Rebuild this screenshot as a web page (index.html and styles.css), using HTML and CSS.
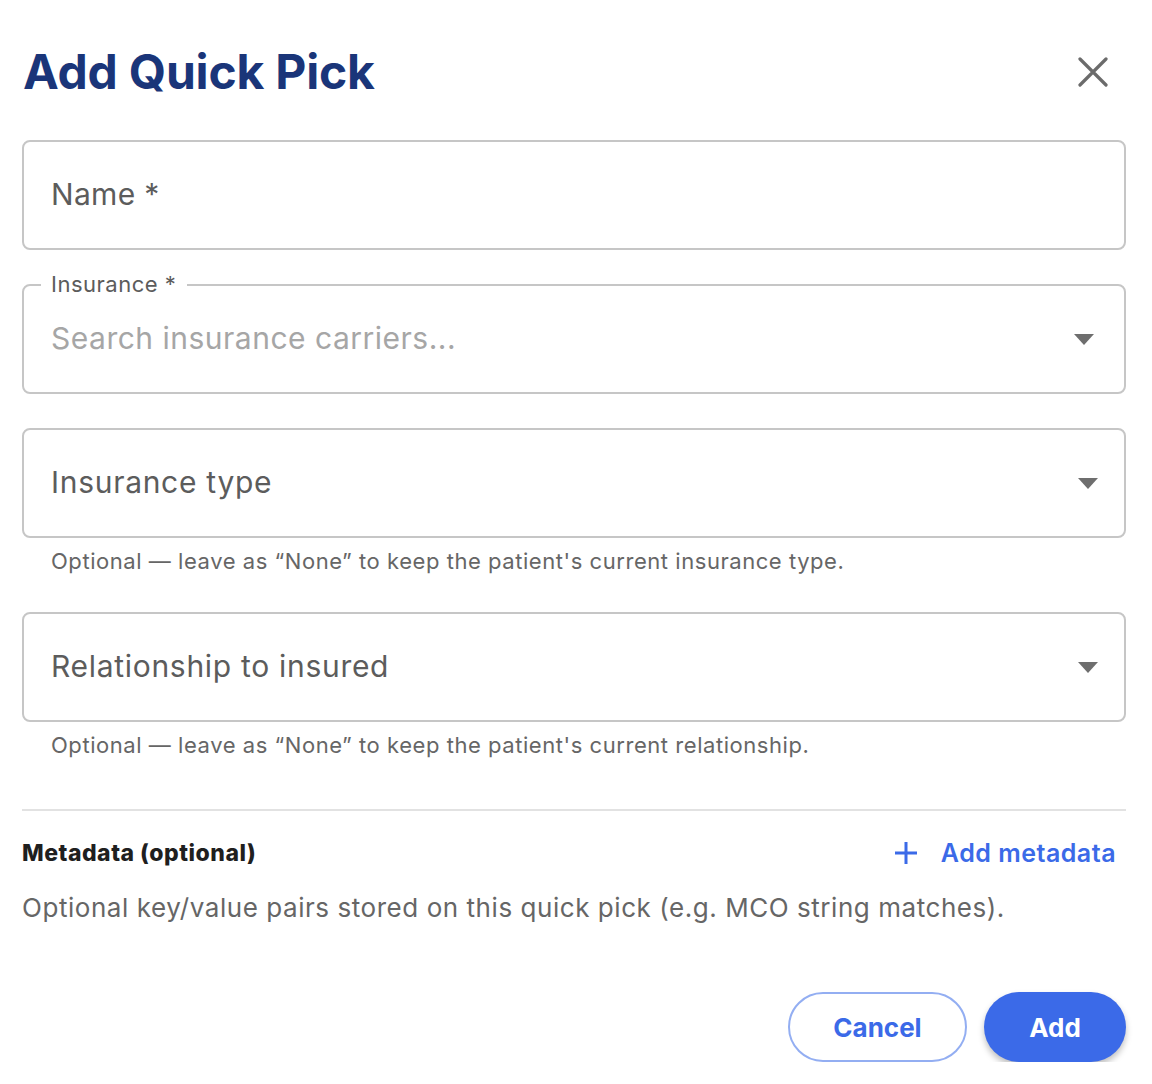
FILE: index.html
```html
<!DOCTYPE html>
<html lang="en">
<head>
<meta charset="utf-8">
<title>Add Quick Pick</title>
<link rel="stylesheet" href="styles.css">
</head>
<body>
<div class="dialog">
  <div class="header">
    <h1 class="title">Add Quick Pick</h1>
    <button class="close" aria-label="Close">
      <svg width="30" height="30" viewBox="0 0 30 30"><path d="M2 2 L28 28 M28 2 L2 28" stroke="#6b6b6b" stroke-width="3.2" stroke-linecap="round" fill="none"/></svg>
    </button>
  </div>

  <div class="field field-name">
    <span class="field-text">Name *</span>
  </div>

  <div class="field field-ins">
    <span class="float-label">Insurance *</span>
    <span class="field-text placeholder">Search insurance carriers...</span>
    <span class="caret caret-a"></span>
  </div>

  <div class="field field-type">
    <span class="field-text">Insurance type</span>
    <span class="caret"></span>
  </div>
  <p class="helper">Optional — leave as “None” to keep the patient's current insurance type.</p>

  <div class="field field-rel">
    <span class="field-text">Relationship to insured</span>
    <span class="caret"></span>
  </div>
  <p class="helper">Optional — leave as “None” to keep the patient's current relationship.</p>

  <hr class="divider">

  <div class="meta-row">
    <span class="meta-title">Metadata (optional)</span>
    <button class="add-meta">
      <svg width="26" height="26" viewBox="0 0 26 26"><path d="M13 2 V24 M2 13 H24" stroke="#3b6ae8" stroke-width="3" fill="none"/></svg>
      <span>Add metadata</span>
    </button>
  </div>
  <p class="meta-desc">Optional key/value pairs stored on this quick pick (e.g. MCO string matches).</p>

  <div class="actions">
    <button class="btn btn-cancel">Cancel</button>
    <button class="btn btn-add">Add</button>
  </div>
</div>
</body>
</html>
```

FILE: styles.css
```css
* { box-sizing: border-box; }
html, body { margin: 0; padding: 0; background: #fff; }
body { font-family: Inter, "Noto Sans", sans-serif; color: #222; }

.dialog {
  width: 1152px;
  padding: 40px 26px 0 22px;
}

.header {
  display: flex;
  align-items: center;
  justify-content: space-between;
  height: 64px;
}
.title {
  margin: 0 0 0 1px;
  font-size: 48px;
  font-weight: 700;
  line-height: 64px;
  letter-spacing: -0.2px;
  color: #1a3579;
}
.close {
  border: 0;
  background: none;
  padding: 0;
  width: 30px;
  height: 30px;
  margin-right: 18px;
  display: flex;
}

.field {
  position: relative;
  height: 110px;
  border: 2px solid #c6c6c6;
  border-radius: 8px;
  display: flex;
  align-items: center;
  padding: 0 26px 0 27px;
}
.field-name { margin-top: 36px; }
.field-ins { margin-top: 34px; }
.field-type { margin-top: 34px; }
.field-rel { margin-top: 40px; }

.field-text {
  font-size: 30px;
  letter-spacing: 0.7px;
  color: #5c5c5c;
  flex: 1;
  margin-top: -2px;
}
.field-name .field-text { letter-spacing: 0.3px; }
.placeholder { color: #a6a6a6; letter-spacing: 0.5px; }

.float-label {
  position: absolute;
  left: 17px;
  top: -15px;
  padding: 0 11px 0 10px;
  background: #fff;
  font-size: 22px;
  line-height: 26px;
  letter-spacing: 0.5px;
  color: #5c5c5c;
}

.caret {
  width: 0;
  height: 0;
  border-left: 10px solid transparent;
  border-right: 10px solid transparent;
  border-top: 11px solid #6e6e6e;
}
.caret-a { margin-right: 4px; }

.helper {
  margin: 12px 0 0 29px;
  font-size: 22px;
  line-height: 22px;
  letter-spacing: 0.55px;
  color: #666;
}

.divider {
  border: 0;
  border-top: 2px solid #e2e2e2;
  margin: 53px 0 0 0;
}

.meta-row {
  margin-top: 22px;
  height: 40px;
  display: flex;
  align-items: center;
  justify-content: space-between;
}
.meta-title {
  font-size: 23px;
  font-weight: 800;
  letter-spacing: 0.5px;
  color: #1f1f1f;
}
.add-meta {
  border: 0;
  background: none;
  padding: 0;
  margin-right: 10px;
  display: flex;
  align-items: center;
  gap: 22px;
  font-family: inherit;
  font-size: 25px;
  font-weight: 600;
  letter-spacing: 0.5px;
  color: #3b6ae8;
}

.meta-desc {
  margin: 17px 0 0 0;
  font-size: 26px;
  line-height: 36px;
  letter-spacing: 0.55px;
  color: #666;
}

.actions {
  margin-top: 66px;
  display: flex;
  justify-content: flex-end;
  gap: 17px;
}
.btn {
  height: 70px;
  border-radius: 35px;
  font-family: inherit;
  font-size: 26px;
  font-weight: 700;
  cursor: pointer;
}
.btn-cancel {
  width: 179px;
  background: #fff;
  border: 2px solid #93aef2;
  color: #3b6ae8;
}
.btn-add {
  width: 142px;
  background: #3b6ae8;
  border: 0;
  color: #fff;
  box-shadow: 0 4px 6px rgba(0,0,0,0.25);
}
```
